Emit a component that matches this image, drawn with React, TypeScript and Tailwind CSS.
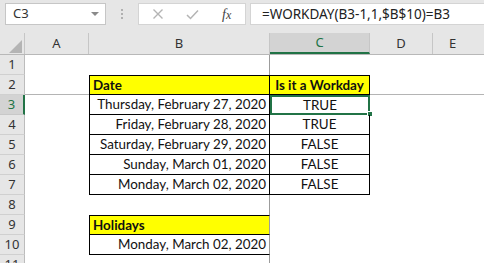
import React from "react";

const cellFont = { fontFamily: "Lato, 'Open Sans', sans-serif" };
const uiFont = { fontFamily: "'Noto Sans', 'Open Sans', sans-serif" };

type Cell = { text?: string; cls?: string };

function Row({
  n,
  a,
  b,
  c,
  d,
  e,
  selected,
}: {
  n: number;
  a?: Cell;
  b?: Cell;
  c?: Cell;
  d?: Cell;
  e?: Cell;
  selected?: boolean;
}) {
  return (
    <div className="flex h-[20px]">
      <div
        className={
          selected
            ? "w-[25px] shrink-0 flex items-center justify-center bg-[#d3d3d3] text-[#217346] border-b border-[#c8c8c8] border-r-2 border-r-[#217346] text-[13px] leading-none"
            : "w-[25px] shrink-0 flex items-center justify-center bg-[#e6e6e6] text-[#333] border-b border-[#d0d0d0] border-r border-r-[#bcbcbc] text-[13px] leading-none"
        }
        style={uiFont}
      >
        {n}
      </div>
      <div className={"w-[64px] shrink-0 " + (a?.cls ?? "")} />
      <div
        className={"w-[181px] shrink-0 flex items-center whitespace-nowrap overflow-hidden text-[13.4px] text-[#111] " + (b?.cls ?? "")}
        style={cellFont}
      >
        {b?.text}
      </div>
      <div
        className={"w-[100px] shrink-0 flex items-center justify-center whitespace-nowrap text-[13.4px] text-[#111] " + (c?.cls ?? "")}
        style={cellFont}
      >
        {c?.text}
      </div>
      <div className={"w-[63px] shrink-0 " + (d?.cls ?? "")} />
      <div className={"flex-1 " + (e?.cls ?? "")} />
    </div>
  );
}

export default function App() {
  const dates = [
    ["Thursday, February 27, 2020", "TRUE"],
    ["Friday, February 28, 2020", "TRUE"],
    ["Saturday, February 29, 2020", "FALSE"],
    ["Sunday, March 01, 2020", "FALSE"],
    ["Monday, March 02, 2020", "FALSE"],
  ];
  return (
    <div className="w-[484px] h-[263px] overflow-hidden bg-white">
      {/* Formula bar */}
      <div className="h-[33px] bg-[#e6e6e6] flex items-start pt-[3px]">
        <div className="ml-[5px] w-[101px] h-[22px] bg-white border border-[#c6c6c6] flex items-center justify-between pl-[7px] pr-[6px]">
          <span className="text-[13px] text-[#333]" style={uiFont}>
            C3
          </span>
          <svg width="8" height="5" viewBox="0 0 8 5">
            <path d="M0 0 L8 0 L4 4 Z" fill="#8a8a8a" />
          </svg>
        </div>
        <div className="w-[32px] h-[22px] flex flex-col items-center justify-center gap-[2px]">
          <div className="w-[2px] h-[2px] bg-[#b0b0b0]" />
          <div className="w-[2px] h-[2px] bg-[#b0b0b0]" />
          <div className="w-[2px] h-[2px] bg-[#b0b0b0]" />
        </div>
        <div className="w-[108px] h-[22px] bg-white border border-[#d4d4d4] flex items-center">
          <svg width="12" height="12" viewBox="0 0 12 12" className="ml-[13px]">
            <path d="M1.5 1.5 L10.5 10.5 M10.5 1.5 L1.5 10.5" stroke="#b4b4b4" strokeWidth="1.4" />
          </svg>
          <svg width="13" height="11" viewBox="0 0 13 11" className="ml-[22px]">
            <path d="M1 6 L4.5 9.5 L12 1.5" stroke="#b4b4b4" strokeWidth="1.5" fill="none" />
          </svg>
          <span
            className="ml-[23px] text-[14px] italic text-[#444]"
            style={{ fontFamily: "'Liberation Serif', serif" }}
          >
            f<span className="text-[12px]">x</span>
          </span>
        </div>
        <div className="ml-[4px] flex-1 h-[22px] bg-white border-y border-l border-[#d4d4d4] flex items-center pl-[11px]">
          <span className="text-[13.5px] text-[#222] whitespace-nowrap" style={uiFont}>
            =WORKDAY(B3-1,1,$B$10)=B3
          </span>
        </div>
      </div>

      {/* Column headers */}
      <div className="flex h-[22px] bg-[#e6e6e6] border-b border-[#b8b8b8]" style={uiFont}>
        <div className="w-[25px] shrink-0 flex items-end justify-end pr-[2px] pb-[1px] border-r border-[#c6c6c6]">
          <svg width="13" height="13" viewBox="0 0 13 13">
            <path d="M13 0 L13 13 L0 13 Z" fill="#b4b4b4" />
          </svg>
        </div>
        <div className="w-[64px] shrink-0 flex items-center justify-center text-[13px] text-[#333] border-r border-[#c6c6c6]">A</div>
        <div className="w-[181px] shrink-0 flex items-center justify-center text-[13px] text-[#333] border-r border-[#c6c6c6]">B</div>
        <div className="w-[100px] shrink-0 flex items-center justify-center text-[13px] text-[#217346] bg-[#d3d3d3] border-b-2 border-[#217346] border-r border-r-[#c6c6c6]">C</div>
        <div className="w-[63px] shrink-0 flex items-center justify-center text-[13px] text-[#333] border-r border-[#c6c6c6]">D</div>
        <div className="flex-1 flex items-center justify-center text-[13px] text-[#333] pr-[12px]">E</div>
      </div>

      {/* Rows */}
      <Row n={1} b={{ cls: "border-r border-[#9c9c9c]" }} />
      <Row
        n={2}
        a={{ cls: "border-b border-[#b4b4b4]" }}
        b={{ text: "Date", cls: "bg-[#ffff00] font-bold border border-black pl-[3px]" }}
        c={{ text: "Is it a Workday", cls: "bg-[#ffff00] font-bold border-y border-r border-black" }}
        d={{ cls: "border-b border-[#b4b4b4]" }}
        e={{ cls: "border-b border-[#b4b4b4]" }}
      />
      {dates.map(([d, v], i) => (
        <div key={i} className="relative">
          <Row
            n={3 + i}
            selected={i === 0}
            b={{ text: d, cls: "justify-end pr-[3px] border-x border-b border-black" }}
            c={{
              text: v,
              cls: i === 0 ? "border-2 border-[#217346]" : "border-r border-b border-black",
            }}
          />
          {i === 0 && (
            <div className="absolute left-[367px] top-[16px] w-[6px] h-[6px] bg-[#217346] border border-white" />
          )}
        </div>
      ))}
      <Row n={8} b={{ cls: "border-r border-[#9c9c9c]" }} />
      <Row
        n={9}
        b={{ text: "Holidays", cls: "bg-[#ffff00] font-bold border-l border-t border-b border-black border-r border-r-[#9c9c9c] pl-[3px]" }}
      />
      <Row
        n={10}
        b={{ text: "Monday, March 02, 2020", cls: "justify-end pr-[3px] border-l border-b border-black border-r border-r-[#9c9c9c]" }}
      />
      <Row n={11} b={{ cls: "border-r border-[#9c9c9c]" }} />
    </div>
  );
}
